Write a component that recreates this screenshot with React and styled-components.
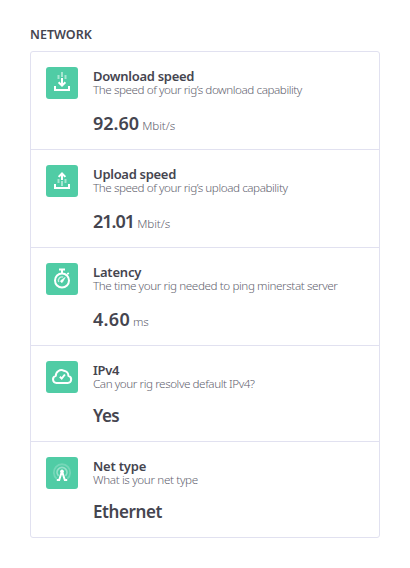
import React from 'react';
import styled, { createGlobalStyle } from 'styled-components';

const GlobalStyle = createGlobalStyle`
  * { box-sizing: border-box; }
  body {
    margin: 0;
    background: #fff;
    color: #45454f;
    font-family: 'Noto Sans', sans-serif;
  }
`;

const Page = styled.main`
  padding: 26px 30px 30px;
`;

const Heading = styled.h2`
  margin: 0 0 8px;
  font-size: 12.5px;
  font-weight: 600;
  line-height: 17px;
`;

const Panel = styled.section`
  border: 1px solid #e1e1f0;
  border-radius: 3px;
`;

const Row = styled.article`
  display: flex;
  gap: 15px;
  height: ${(p) => (p.$numeric ? 98 : 96)}px;
  padding: 15px 15px 0;
  border-bottom: 1px solid #e1e1f0;

  &:last-child {
    height: 95px;
    border-bottom: 0;
  }
`;

const Tile = styled.svg`
  flex: none;
  width: 32px;
  height: 32px;
  border-radius: 3px;
  background: #50cca5;
  fill: none;
  stroke: #fff;
  stroke-width: 2;
`;

const Copy = styled.div`
  padding-top: 2px;
  white-space: nowrap;
`;

const Title = styled.h3`
  margin: 0;
  font-size: 13px;
  font-weight: 600;
  line-height: 14px;
  letter-spacing: ${(p) => p.$track}px;
`;

const Description = styled.p`
  margin: 0;
  color: #63636f;
  font-size: 11.7px;
  font-weight: 300;
  line-height: 13px;
  letter-spacing: ${(p) => p.$track}px;
`;

const Reading = styled.div`
  display: flex;
  align-items: baseline;
  gap: 3px;
  margin-top: 14px;
`;

const Value = styled.strong`
  font-size: ${(p) => (p.$numeric ? 18 : 17)}px;
  font-weight: 600;
  line-height: ${(p) => (p.$numeric ? 26 : 24)}px;
  letter-spacing: ${(p) => p.$track}px;
`;

const Unit = styled.span`
  color: #63636f;
  font-size: 11.7px;
  font-weight: 300;
  line-height: 14px;
  letter-spacing: ${(p) => p.$track}px;
`;

const DownloadIcon = () => (
  <Tile viewBox="0 0 32 32">
    <path d="M9 19v4h14v-4M16 11v8M12.6 15.2 16 18.6l3.4-3.4" />
    <path d="M12.5 8v4M19.5 8v4M16 5v5" strokeOpacity=".5" />
  </Tile>
);

const UploadIcon = () => (
  <Tile viewBox="0 0 32 32">
    <path d="M9 19v4h14v-4M16 8.5V15M12.6 11.9 16 8.5l3.4 3.4" />
    <path d="M12.5 14v4M19.5 14v4M16 16v5" strokeOpacity=".5" />
  </Tile>
);

const StopwatchIcon = () => (
  <Tile viewBox="0 0 32 32">
    <circle cx="16" cy="17.5" r="7" />
    <path d="M13 6.5h6M16 6.5v4M21.4 10l1.2 1.2" />
    <path d="M12.7 19a3.6 3.6 0 0 1 4.6-4.8" strokeWidth="1.4" strokeOpacity=".7" />
    <path d="m15.1 17.2 4.2-2.9-2.4 4.3a1.2 1.2 0 1 1-1.8-1.4Z" fill="#fff" strokeWidth=".5" />
  </Tile>
);

const CloudIcon = () => (
  <Tile viewBox="0 0 32 32">
    <path
      d="M10.5 22h11.2a3.6 3.6 0 0 0 .7-7.1 5 5 0 0 0-4.4-5.1 5.6 5.6 0 0 0-8.2 5.1 3.6 3.6 0 0 0 .7 7.1Z"
      strokeLinejoin="round"
    />
    <path d="m13.9 15.8 1.8 1.8 3.2-4.1" />
  </Tile>
);

const AntennaIcon = () => (
  <Tile viewBox="0 0 32 32">
    <path d="M10.7 21.7a8.2 8.2 0 1 1 10.6 0" strokeWidth="1.8" strokeOpacity=".22" />
    <path d="M12.5 18.8a4.9 4.9 0 1 1 7 0" strokeWidth="1.8" strokeOpacity=".4" />
    <path d="M10.8 23h2.4l2.5-8h.6l2.5 8h2.4" />
    <circle cx="16" cy="14.3" r="1.8" fill="#fff" stroke="none" />
  </Tile>
);

const metrics = [
  {
    Icon: DownloadIcon, title: 'Download speed', titleTrack: -0.28,
    text: 'The speed of your rig’s download capability', textTrack: -0.44,
    value: '92.60', valueTrack: 0, unit: 'Mbit/s', unitTrack: -0.07,
  },
  {
    Icon: UploadIcon, title: 'Upload speed', titleTrack: -0.3,
    text: 'The speed of your rig’s upload capability', textTrack: -0.44,
    value: '21.01', valueTrack: -1, unit: 'Mbit/s', unitTrack: -0.07,
  },
  {
    Icon: StopwatchIcon, title: 'Latency', titleTrack: -0.2,
    text: 'The time your rig needed to ping minerstat server', textTrack: -0.41,
    value: '4.60', valueTrack: 0.3, unit: 'ms', unitTrack: -0.3,
  },
  {
    Icon: CloudIcon, title: 'IPv4', titleTrack: -0.3,
    text: 'Can your rig resolve default IPv4?', textTrack: -0.44,
    value: 'Yes', valueTrack: -0.5,
  },
  {
    Icon: AntennaIcon, title: 'Net type', titleTrack: -0.2,
    text: 'What is your net type', textTrack: -0.36,
    value: 'Ethernet', valueTrack: -0.42,
  },
];

export default function App() {
  return (
    <>
      <GlobalStyle />
      <Page>
        <Heading>NETWORK</Heading>
        <Panel>
          {metrics.map(({ Icon, ...m }) => (
            <Row key={m.title} $numeric={Boolean(m.unit)}>
              <Icon />
              <Copy>
                <Title $track={m.titleTrack}>{m.title}</Title>
                <Description $track={m.textTrack}>{m.text}</Description>
                <Reading>
                  <Value $numeric={Boolean(m.unit)} $track={m.valueTrack}>{m.value}</Value>
                  {m.unit && <Unit $track={m.unitTrack}>{m.unit}</Unit>}
                </Reading>
              </Copy>
            </Row>
          ))}
        </Panel>
      </Page>
    </>
  );
}
